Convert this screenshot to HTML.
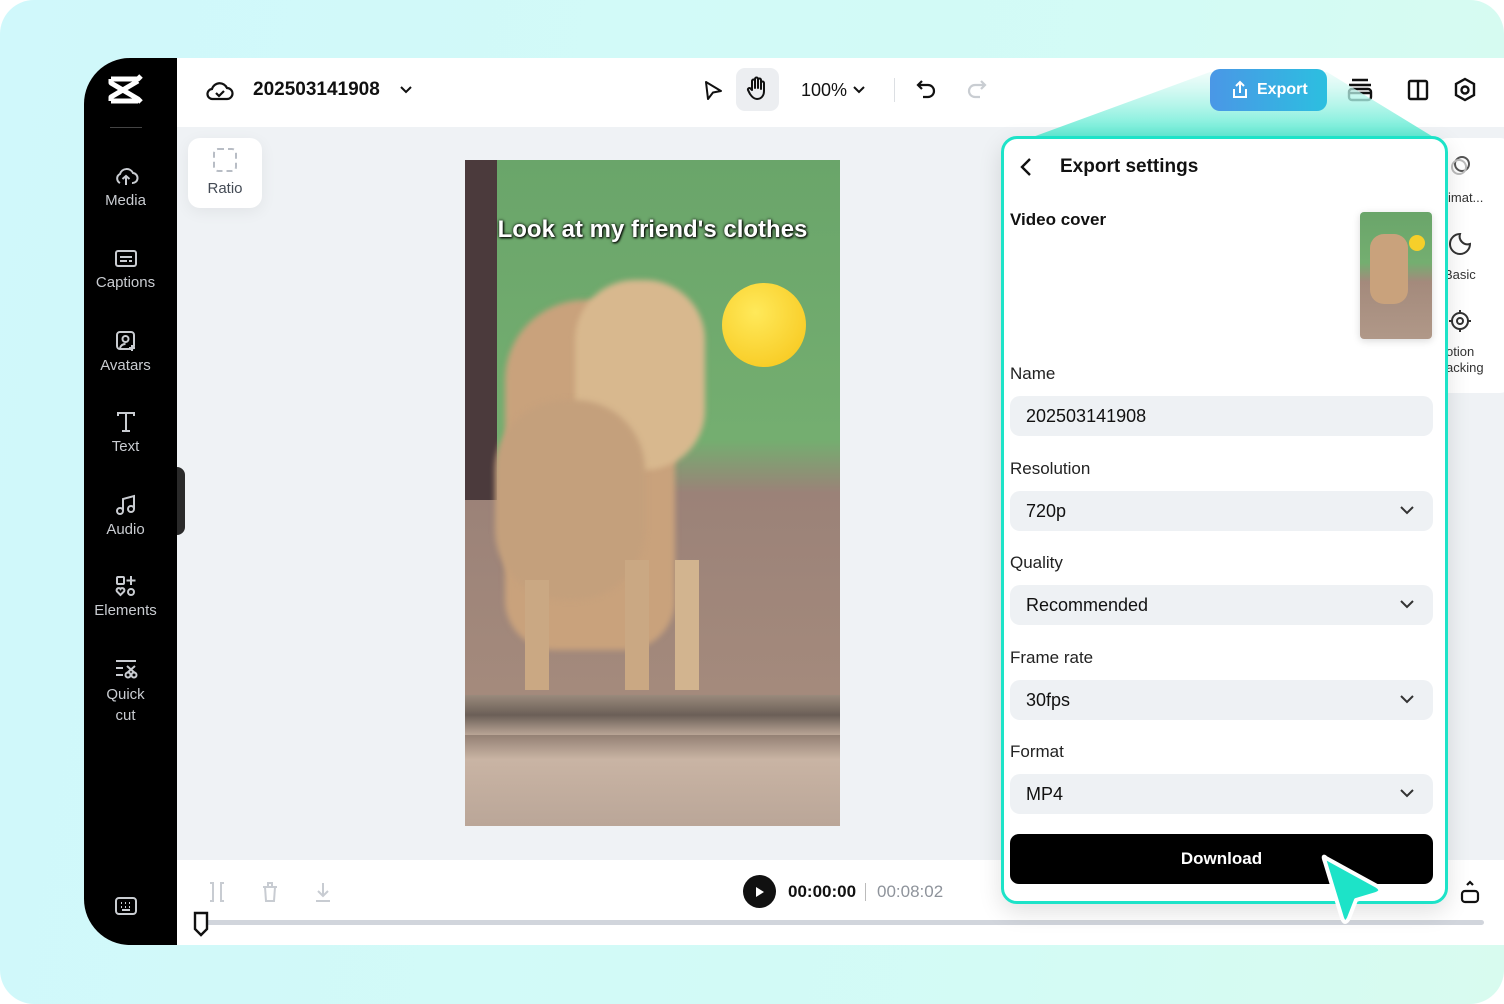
<!DOCTYPE html>
<html><head><meta charset="utf-8"><style>
*{margin:0;padding:0;box-sizing:border-box}
body{width:1504px;height:1004px;overflow:hidden;font-family:"Liberation Sans",sans-serif;background:#fff;position:relative}
.bg{position:absolute;inset:0;border-radius:34px;background:linear-gradient(100deg,#d0f8fb,#d3fbf5 70%,#d8fbef)}
.app{position:absolute;left:84px;top:58px;width:1420px;height:887px;border-radius:46px 0 0 46px;overflow:hidden;background:#eff2f5}
.side{position:absolute;left:0;top:0;width:93px;height:100%;background:#000}
.top{position:absolute;left:93px;top:0;right:0;height:69px;background:#fff}
.abs{position:absolute}
.nav{position:absolute;left:0;width:83px;text-align:center;color:#c9ccd1;font-size:15px}
.nav svg{display:block;margin:0 auto 4px}
.lbl{position:absolute;left:1010px;font-size:17px;color:#222}
.fld{position:absolute;left:1010px;width:423px;height:40px;background:#eef1f4;border-radius:10px;font-size:18px;color:#111;padding:10px 16px}
.fld svg{position:absolute;right:18px;top:13px}
</style></head><body>
<div class="bg"></div>
<div class="app">
 <div class="side">
  <svg class="abs" style="left:24px;top:16px" width="36" height="32" viewBox="0 0 36 32"><path d="M3 5 L30 5 L33 2 M3 5 L3 9 L30 25 L33 28 M3 27 L30 27 M3 27 L3 23 L30 7" stroke="#fff" stroke-width="5" fill="none" stroke-linejoin="round"/></svg>
  <div class="abs" style="left:26px;top:69px;width:32px;height:1px;background:#444"></div>
  <div class="nav" style="top:106px"><svg width="26" height="24" viewBox="0 0 26 24" fill="none" stroke="#c9ccd1" stroke-width="2"><path d="M7 19 A5 5 0 0 1 7 10 A7 7 0 0 1 20 9 A5 5 0 0 1 19 19 M13 21 V12 M9.5 15 L13 12 L16.5 15"/></svg>Media</div>
  <div class="nav" style="top:190px"><svg width="24" height="22" viewBox="0 0 24 22" fill="none" stroke="#c9ccd1" stroke-width="2"><rect x="2" y="3" width="20" height="15" rx="2"/><path d="M6 9h12M6 13h7M15 13h3"/></svg>Captions</div>
  <div class="nav" style="top:271px"><svg width="24" height="24" viewBox="0 0 24 24" fill="none" stroke="#c9ccd1" stroke-width="2"><rect x="3" y="3" width="17" height="17" rx="3"/><circle cx="11.5" cy="10" r="3"/><path d="M6 19c1-3 3-4 5.5-4 M18 16v6M15 19h6"/></svg>Avatars</div>
  <div class="nav" style="top:352px"><svg width="24" height="24" viewBox="0 0 24 24" fill="none" stroke="#c9ccd1" stroke-width="2"><path d="M4 6V3h16v3M12 3v18M8 21h8"/></svg>Text</div>
  <div class="nav" style="top:435px"><svg width="24" height="24" viewBox="0 0 24 24" fill="none" stroke="#c9ccd1" stroke-width="2"><circle cx="6" cy="18" r="3"/><circle cx="17" cy="16" r="3"/><path d="M9 18V6l11-3v13"/></svg>Audio</div>
  <div class="nav" style="top:516px"><svg width="24" height="24" viewBox="0 0 24 24" fill="none" stroke="#c9ccd1" stroke-width="2"><rect x="3" y="3" width="7" height="7" rx="1"/><path d="M17 2v9M12.5 6.5h9M6.5 21l-3.5-3.5a2 2 0 0 1 3.5-2.5a2 2 0 0 1 3.5 2.5z"/><circle cx="17" cy="18" r="3"/></svg>Elements</div>
  <div class="nav" style="top:600px;line-height:21px"><svg width="26" height="22" viewBox="0 0 26 22" fill="none" stroke="#c9ccd1" stroke-width="2"><path d="M3 3h20M3 10h7M3 17h7"/><circle cx="15" cy="17" r="2.5"/><circle cx="21" cy="17" r="2.5"/><path d="M14 8l8 7M22 8l-8 7"/></svg>Quick<br>cut</div>
  <svg class="abs" style="left:30px;top:838px" width="24" height="20" viewBox="0 0 24 20" fill="none" stroke="#c9ccd1" stroke-width="2"><rect x="2" y="2" width="20" height="16" rx="3"/><path d="M7 7h1M11 7h1M15 7h1M7 11h1M11 11h1M15 11h1M8 14h8"/></svg>
 </div>
 <div class="abs" style="left:93px;top:409px;width:8px;height:68px;background:#2a2a2a;border-radius:0 8px 8px 0"></div>
 <div class="top">
  <svg class="abs" style="left:29px;top:20px" width="28" height="24" viewBox="0 0 28 24" fill="none" stroke="#111" stroke-width="2.2"><path d="M7 21A5 5 0 0 1 6 11A8 8 0 0 1 21 10A5.5 5.5 0 0 1 21 21Z"/><path d="M10 15l3 3 5-5"/></svg>
  <div class="abs" style="left:76px;top:21px;font-size:19px;font-weight:bold;color:#111">202503141908</div>
  <svg class="abs" style="left:222px;top:27px" width="14" height="10" viewBox="0 0 14 10"><path d="M2 2l5 5 5-5" stroke="#111" stroke-width="2" fill="none"/></svg>
  <svg class="abs" style="left:525px;top:21px" width="22" height="24" viewBox="0 0 22 24"><path d="M4 3L19 12L11 13.5L6 20Z" stroke="#111" stroke-width="2" fill="none" stroke-linejoin="round"/></svg>
  <div class="abs" style="left:559px;top:10px;width:43px;height:43px;border-radius:9px;background:#eceef1"></div>
  <svg class="abs" style="left:568px;top:18px" width="24" height="26" viewBox="0 0 24 26" fill="none" stroke="#111" stroke-width="2" stroke-linejoin="round"><path d="M7 14V5a1.5 1.5 0 0 1 3 0v7V3a1.5 1.5 0 0 1 3 0v9V4a1.5 1.5 0 0 1 3 0v9V7a1.5 1.5 0 0 1 3 0v8c0 5-3 8-7 8c-3 0-5-2-7-5l-2-4a1.5 1.5 0 0 1 2.5-1.5Z"/></svg>
  <div class="abs" style="left:624px;top:22px;font-size:18px;color:#111">100%</div>
  <svg class="abs" style="left:676px;top:27px" width="12" height="9" viewBox="0 0 12 9"><path d="M1 2l5 5 5-5" stroke="#111" stroke-width="2" fill="none"/></svg>
  <div class="abs" style="left:717px;top:20px;width:1px;height:24px;background:#dcdfe3"></div>
  <svg class="abs" style="left:738px;top:20px" width="22" height="22" viewBox="0 0 22 22" fill="none" stroke="#111" stroke-width="2.2"><path d="M7 3L3 7l4 4M3 7h10a6 6 0 0 1 0 12H8"/></svg>
  <svg class="abs" style="left:789px;top:20px" width="22" height="22" viewBox="0 0 22 22" fill="none" stroke="#c9cdd2" stroke-width="2.2"><path d="M15 3l4 4-4 4M19 7H9a6 6 0 0 0 0 12h5"/></svg>
  <svg class="abs" style="left:1169px;top:19px" width="28" height="26" viewBox="0 0 28 26" fill="none" stroke="#111" stroke-width="2.4"><path d="M6 3h16M3 8h22"/><rect x="3" y="12" width="22" height="11" rx="3"/><path d="M3 16h22"/></svg>
  <svg class="abs" style="left:1230px;top:20px" width="22" height="24" viewBox="0 0 22 24" fill="none" stroke="#111" stroke-width="2.4"><rect x="2" y="3" width="18" height="18" rx="1.5"/><path d="M11 3v18"/></svg>
  <svg class="abs" style="left:1276px;top:19px" width="24" height="26" viewBox="0 0 24 26" fill="none" stroke="#111" stroke-width="2.4"><path d="M12 2l9 5v11l-9 5-9-5V7z"/><circle cx="12" cy="13" r="3.5"/></svg>
 </div>
 <div class="abs" style="left:104px;top:80px;width:74px;height:70px;background:#fff;border-radius:12px;box-shadow:0 4px 16px rgba(0,0,0,.06);text-align:center;font-size:15px;color:#444b55;padding-top:10px">
  <div style="width:24px;height:24px;border:2px dashed #b8bdc5;border-radius:5px;margin:0 auto 8px"></div>Ratio</div>
 <!-- video -->
 <div class="abs" style="left:381px;top:102px;width:375px;height:666px;overflow:hidden;background:linear-gradient(180deg,#6aa56a 0%,#74ae70 42%,#9b8278 50%,#a48a7c 80%,#8f7c70 86%,#c9b4a4 90%,#baa698 100%)">
  <div class="abs" style="left:0;top:0;width:32px;height:340px;background:#4b3a3c"></div>
  <div class="abs" style="left:0;top:535px;width:375px;height:40px;background:linear-gradient(#9a8a7c,#6b5f57 50%,#b9a596)"></div>
  <div class="abs" style="left:40px;top:140px;width:170px;height:350px;border-radius:80px 90px 50px 50px;background:#c9a27c;filter:blur(3px)"></div>
  <div class="abs" style="left:110px;top:120px;width:130px;height:190px;border-radius:60px;background:#d8b88e;filter:blur(3px)"></div>
  <div class="abs" style="left:30px;top:240px;width:150px;height:200px;border-radius:70px;background:#c4a07c;filter:blur(3px)"></div>
  <div class="abs" style="left:60px;top:420px;width:24px;height:110px;background:#caa883"></div>
  <div class="abs" style="left:160px;top:400px;width:24px;height:130px;background:#caa883"></div>
  <div class="abs" style="left:210px;top:400px;width:24px;height:130px;background:#d2b48f"></div>
  <div class="abs" style="left:257px;top:123px;width:84px;height:84px;border-radius:50%;background:radial-gradient(circle at 40% 35%,#ffe95a,#f6c417)"></div>
  <div class="abs" style="left:0;top:56px;width:375px;text-align:center;color:#fff;font-size:24px;font-weight:bold;font-family:'Liberation Sans',sans-serif;text-shadow:0 0 3px #000,1px 1px 2px #000">Look at my friend's clothes</div>
 </div>
 <!-- right partial panel -->
 <div class="abs" style="left:1350px;top:80px;width:80px;height:255px;background:#fff;border-radius:14px"></div>
 <div class="abs" style="left:1364px;top:132px;font-size:13px;color:#333">imat...</div>
 <div class="abs" style="left:1360px;top:209px;font-size:13px;color:#333">Basic</div>
 <div class="abs" style="left:1362px;top:286px;font-size:13px;color:#333;line-height:16px">otion<br>acking</div>
 <svg class="abs" style="left:1363px;top:95px" width="26" height="26" viewBox="0 0 26 26" fill="none" stroke="#555" stroke-width="2"><circle cx="15" cy="11" r="7"/><circle cx="12" cy="14" r="7" stroke="#bbb"/></svg>
 <svg class="abs" style="left:1364px;top:174px" width="24" height="24" viewBox="0 0 24 24" fill="none" stroke="#333" stroke-width="2"><path d="M12 2a10 10 0 1 0 10 10 A8 8 0 0 1 12 2Z"/></svg>
 <svg class="abs" style="left:1364px;top:251px" width="24" height="24" viewBox="0 0 24 24" fill="none" stroke="#333" stroke-width="2"><circle cx="12" cy="12" r="8"/><circle cx="12" cy="12" r="3"/><path d="M12 1v3M12 20v3M1 12h3M20 12h3"/></svg>
 <!-- bottom bar -->
 <div class="abs" style="left:93px;top:802px;right:0;height:85px;background:#fff"></div>
 <svg class="abs" style="left:124px;top:823px" width="18" height="22" viewBox="0 0 18 22" fill="none" stroke="#c8ccd2" stroke-width="2"><path d="M2 2h3v18H2M16 2h-3v18h3"/></svg>
 <svg class="abs" style="left:176px;top:823px" width="20" height="22" viewBox="0 0 20 22" fill="none" stroke="#c8ccd2" stroke-width="2"><path d="M3 6h14M8 6V2h4v4M5 6l1 14h8l1-14"/></svg>
 <svg class="abs" style="left:229px;top:823px" width="20" height="22" viewBox="0 0 20 22" fill="none" stroke="#c8ccd2" stroke-width="2"><path d="M10 2v13M5 10l5 5 5-5M3 20h14"/></svg>
 <div class="abs" style="left:659px;top:817px;width:33px;height:33px;border-radius:50%;background:#111"></div>
 <svg class="abs" style="left:671px;top:828px" width="10" height="12" viewBox="0 0 10 12"><path d="M1 1l8 5-8 5z" fill="#fff"/></svg>
 <div class="abs" style="left:704px;top:824px;font-size:17px;font-weight:bold;color:#111">00:00:00</div>
 <div class="abs" style="left:781px;top:825px;width:1px;height:18px;background:#bbb"></div>
 <div class="abs" style="left:793px;top:824px;font-size:17px;color:#8e939b">00:08:02</div>
 <svg class="abs" style="left:1376px;top:821px" width="20" height="26" viewBox="0 0 20 26" fill="none" stroke="#111" stroke-width="2.2"><path d="M7 6l3-3 3 3"/><rect x="2" y="12" width="16" height="11" rx="3"/></svg>
 <div class="abs" style="left:118px;top:862px;right:20px;height:5px;background:#d1d5dc;border-radius:3px"></div>
 <svg class="abs" style="left:108px;top:852px" width="18" height="28" viewBox="0 0 18 28"><path d="M3 3h12v16l-6 6-6-6z" fill="#fff" stroke="#111" stroke-width="2.4"/></svg>
</div>
<!-- teal beam -->
<svg class="abs" style="left:0;top:0" width="1504" height="1004"><defs><linearGradient id="g" x1="0" y1="0" x2="0" y2="1"><stop offset="0" stop-color="#e6fbf7" stop-opacity=".6"/><stop offset="1" stop-color="#5eebd3"/></linearGradient></defs><polygon points="1210,72 1327,72 1435,138 1030,138" fill="url(#g)"/></svg>
<div class="abs" style="left:1210px;top:69px;width:117px;height:42px;border-radius:10px;background:linear-gradient(90deg,#4a97e6,#2cbfe0);color:#fff;font-size:16px;font-weight:bold;padding:12px 0 0 47px">Export</div>
<svg class="abs" style="left:1231px;top:80px" width="18" height="20" viewBox="0 0 18 20" fill="none" stroke="#fff" stroke-width="2"><path d="M9 13V2M5 6l4-4 4 4M3 9v8h12V9"/></svg>
<!-- export panel -->
<div class="abs" style="left:1001px;top:136px;width:447px;height:768px;border:3px solid #1de3c8;border-radius:16px;background:#fff;box-shadow:0 8px 24px rgba(0,0,0,.12)"></div>
<svg class="abs" style="left:1019px;top:157px" width="14" height="20" viewBox="0 0 14 20"><path d="M11 2L3 10l8 8" stroke="#111" stroke-width="2.4" fill="none"/></svg>
<div class="abs" style="left:1060px;top:156px;font-size:19px;font-weight:bold;color:#111">Export settings</div>
<div class="abs" style="left:1010px;top:210px;font-size:17px;font-weight:bold;color:#111">Video cover</div>
<div class="abs" style="left:1360px;top:212px;width:72px;height:127px;border-radius:4px;overflow:hidden;background:linear-gradient(180deg,#6aa56a 0%,#74ae70 40%,#a48a7c 55%,#b09888 100%);box-shadow:0 2px 8px rgba(0,0,0,.15)">
 <div class="abs" style="left:10px;top:22px;width:38px;height:70px;border-radius:14px;background:#c9a27c"></div>
 <div class="abs" style="left:49px;top:23px;width:16px;height:16px;border-radius:50%;background:#f6cf2a"></div></div>
<div class="lbl" style="top:364px">Name</div>
<div class="fld" style="top:396px">202503141908</div>
<div class="lbl" style="top:459px">Resolution</div>
<div class="fld" style="top:491px">720p<svg width="16" height="12" viewBox="0 0 16 12"><path d="M2 3l6 6 6-6" stroke="#333" stroke-width="2" fill="none"/></svg></div>
<div class="lbl" style="top:553px">Quality</div>
<div class="fld" style="top:585px">Recommended<svg width="16" height="12" viewBox="0 0 16 12"><path d="M2 3l6 6 6-6" stroke="#333" stroke-width="2" fill="none"/></svg></div>
<div class="lbl" style="top:648px">Frame rate</div>
<div class="fld" style="top:680px">30fps<svg width="16" height="12" viewBox="0 0 16 12"><path d="M2 3l6 6 6-6" stroke="#333" stroke-width="2" fill="none"/></svg></div>
<div class="lbl" style="top:742px">Format</div>
<div class="fld" style="top:774px">MP4<svg width="16" height="12" viewBox="0 0 16 12"><path d="M2 3l6 6 6-6" stroke="#333" stroke-width="2" fill="none"/></svg></div>
<div class="abs" style="left:1010px;top:834px;width:423px;height:50px;border-radius:9px;background:#000;color:#fff;font-size:17px;font-weight:bold;text-align:center;line-height:50px">Download</div>
<svg class="abs" style="left:1312px;top:848px" width="80" height="85" viewBox="0 0 80 85"><path d="M14 10 Q10 6 13 14 L30 70 Q33 78 37 70 L44 52 L64 46 Q72 43 65 38 Z" fill="#1de3c8" stroke="#fff" stroke-width="4" stroke-linejoin="round"/></svg>
</body></html>
